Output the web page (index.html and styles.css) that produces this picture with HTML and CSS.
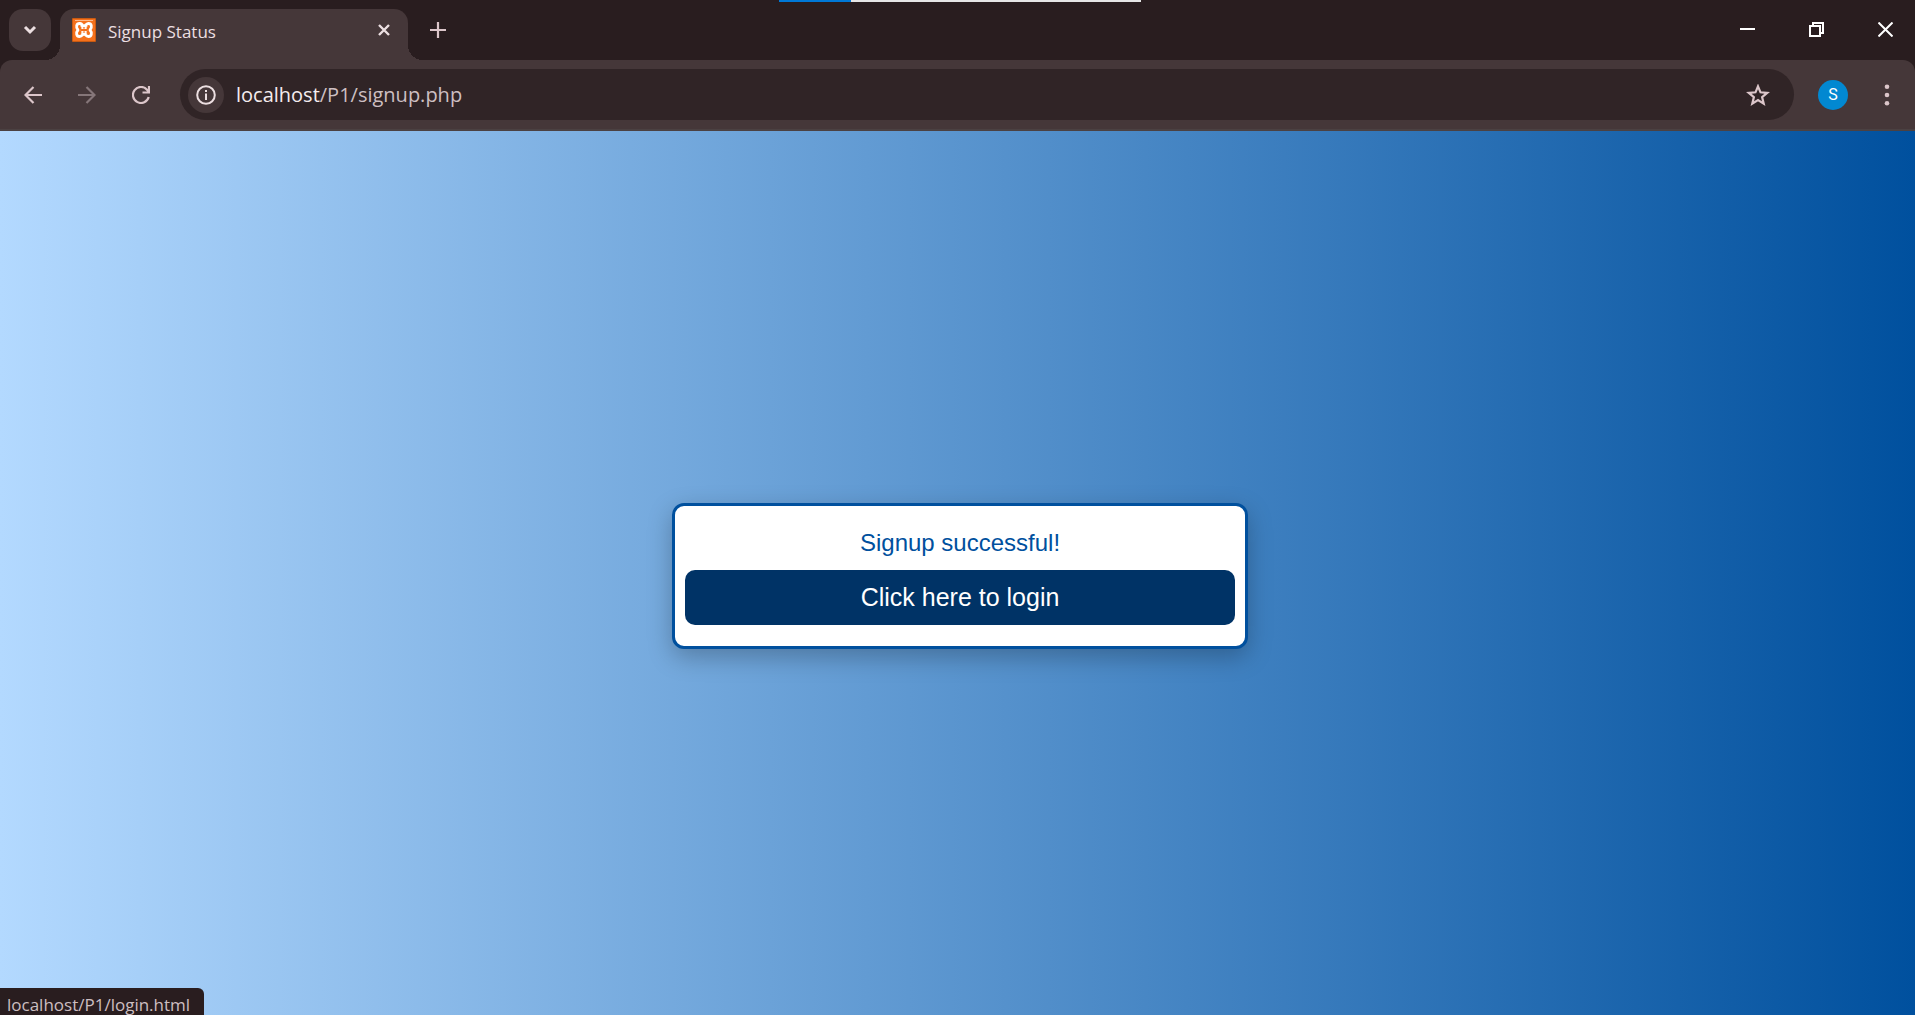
FILE: index.html
```html
<!DOCTYPE html>
<html lang="en">
<head>
<meta charset="utf-8">
<title>Signup Status</title>
<link rel="stylesheet" href="styles.css">
</head>
<body>
<div class="browser">
  <header class="tabstrip">
    <button class="tab-search" aria-label="Search tabs">
      <svg width="14" height="10" viewBox="0 0 14 10"><path d="M2 2l5 5 5-5" fill="none" stroke="currentColor" stroke-width="3"/></svg>
    </button>
    <div class="tab">
      <svg class="favicon" width="24" height="24" viewBox="0 0 24 24">
        <rect width="24" height="24" rx="1" fill="#c85a12"/>
        <rect x="1" y="1" width="22" height="22" fill="#f4701c"/>
        <path d="M3 2.500h18" stroke="#ffb98a" stroke-width="1"/>
        <path d="M9.500 12h5M9.500 9.500C10.500 7 9.500 5.500 7.500 5.500C4.500 5.500 3.500 9 6 12C3.500 15 4.500 18.500 7.500 18.500C10.500 18.500 10.500 16 12 16S13.500 18.500 16.500 18.500C19.500 18.500 20.500 15 18 12C20.500 9 19.500 5.500 16.500 5.500C14.500 5.500 13.500 8 12 8S10.500 5.500 8 5.500M14.500 9.500v5M9.500 9.500v5" fill="none" stroke="#fff" stroke-width="2.800" stroke-linecap="round" stroke-linejoin="round"/>
        <path d="M8.500 9.500v1.500M15.500 9.500v1.500M8.500 13.500v1.500M15.500 13.500v1.500M9 12h6" stroke="#f4701c" stroke-width="1.800" stroke-linecap="round"/>
      </svg>
      <span class="tab-title">Signup Status</span>
      <button class="icon-button tab-close" aria-label="Close tab">
        <svg width="12" height="12" viewBox="0 0 12 12"><path d="M1 1l10 10M11 1L1 11" stroke="currentColor" stroke-width="2.400"/></svg>
      </button>
    </div>
    <button class="icon-button new-tab" aria-label="New tab">
      <svg width="16" height="16" viewBox="0 0 16 16"><path d="M8 0v16M0 8h16" stroke="currentColor" stroke-width="2.200"/></svg>
    </button>
    <div class="window-controls">
      <button class="icon-button" aria-label="Minimize"><svg width="15" height="15" viewBox="0 0 15 15"><path d="M0 7h15" stroke="#fff" stroke-width="2"/></svg></button>
      <button class="icon-button" aria-label="Restore"><svg width="15" height="15" viewBox="0 0 15 15"><path d="M1 4h10v10H1zM4 4V1h10v10h-3" fill="none" stroke="#fff" stroke-width="2"/></svg></button>
      <button class="icon-button" aria-label="Close"><svg width="15" height="15" viewBox="0 0 15 15"><path d="M.5.500l14 14M14.500.500l-14 14" stroke="#fff" stroke-width="2"/></svg></button>
    </div>
    <div class="drag-handle"></div>
  </header>

  <nav class="toolbar">
    <button class="icon-button" aria-label="Back"><svg width="18" height="18" viewBox="0 0 18 18"><path d="M18 9H2M9.500 1L1.500 9l8 8" fill="none" stroke="currentColor" stroke-width="2.200"/></svg></button>
    <button class="icon-button forward" aria-label="Forward" disabled><svg width="18" height="18" viewBox="0 0 18 18"><path d="M0 9h16M8.500 1l8 8-8 8" fill="none" stroke="currentColor" stroke-width="2.200"/></svg></button>
    <button class="icon-button" aria-label="Reload"><svg width="18" height="18" viewBox="0 0 18 18"><path d="M16.700 11A8 8 0 1 1 15 3.700L17 6M17 0v6.500h-6.500" fill="none" stroke="currentColor" stroke-width="2.200"/></svg></button>
    <div class="omnibox">
      <button class="icon-button site-info" aria-label="View site information"><svg width="20" height="20" viewBox="0 0 20 20"><circle cx="10" cy="10" r="8.800" fill="none" stroke="currentColor" stroke-width="2"/><path d="M10 8.500V15M10 5v2" stroke="currentColor" stroke-width="2"/></svg></button>
      <span class="url"><span class="host">localhost</span>/P1/signup.php</span>
      <button class="icon-button bookmark" aria-label="Bookmark this tab"><svg width="24" height="22" viewBox="0 0 24 22"><path d="M12 2.300l2.500 6 6.700.500-5.100 4.300 1.600 6.500-5.700-3.500-5.700 3.500 1.600-6.500-5.100-4.300 6.700-.500z" fill="none" stroke="currentColor" stroke-width="2.200"/></svg></button>
    </div>
    <button class="avatar" aria-label="Profile">S</button>
    <button class="icon-button menu" aria-label="Menu"><svg width="6" height="22" viewBox="0 0 6 22"><g fill="currentColor"><circle cx="3" cy="2.700" r="2.300"/><circle cx="3" cy="11" r="2.300"/><circle cx="3" cy="19.300" r="2.300"/></g></svg></button>
  </nav>

  <main class="page">
    <section class="card">
      <p class="message">Signup successful!</p>
      <a class="login" href="login.html">Click here to login</a>
    </section>
    <div class="status">localhost/P1/login.html</div>
  </main>
</div>
</body>
</html>
```
FILE: styles.css
```css
* {
  box-sizing: border-box;
}

body {
  margin: 0;
  font-family: "Open Sans", "Noto Sans", sans-serif;
  background: #291d1f;
}

button {
  padding: 0;
  border: 0;
  font: inherit;
}

svg {
  display: block;
}

.browser {
  display: flex;
  flex-direction: column;
  min-height: 100vh;
}

.icon-button {
  display: flex;
  flex: none;
  align-items: center;
  justify-content: center;
  width: 36px;
  height: 36px;
  border-radius: 18px;
  background: transparent;
  color: #dcc6ca;
}

.tabstrip {
  position: relative;
  display: flex;
  height: 60px;
  padding: 9px 12px 0 9px;
}

.tab-search {
  display: flex;
  align-items: center;
  justify-content: center;
  width: 42px;
  height: 42px;
  border-radius: 14px;
  background: #453739;
  color: #ecdfe1;
}

.tab {
  position: relative;
  display: flex;
  align-items: center;
  width: 348px;
  height: 51px;
  margin-left: 9px;
  padding: 0 6px 9px 12px;
  border-radius: 14px 14px 0 0;
  background: #453739;
}

.tab::before,
.tab::after {
  content: "";
  position: absolute;
  bottom: 0;
  width: 15px;
  height: 15px;
}

.tab::before {
  right: 100%;
  background: radial-gradient(circle at 0 0, transparent 15px, #453739 15px);
}

.tab::after {
  left: 100%;
  background: radial-gradient(circle at 100% 0, transparent 15px, #453739 15px);
}

.tab-title {
  flex: 1;
  padding: 4px 0 0 12px;
  font-size: 17px;
  line-height: 24px;
  color: #ecdfe1;
}

.tab-close {
  color: #ecdfe1;
}

.new-tab {
  margin: 3px 0 0 12px;
}

.window-controls {
  display: flex;
  gap: 33px;
  margin: 2px 0 0 auto;
}

.drag-handle {
  position: absolute;
  top: 0;
  left: 50%;
  width: 362px;
  height: 2px;
  margin-left: -179px;
  background: linear-gradient(to right, #0078d7 72px, #e6e6e6 72px);
}

.toolbar {
  display: flex;
  align-items: center;
  height: 71px;
  padding: 0 10px 0 15px;
  gap: 18px;
  border-bottom: 2px solid #4b4142;
  border-radius: 12px 12px 0 0;
  background: #453739;
}

.forward {
  color: #857679;
}

.omnibox {
  display: flex;
  flex: 1;
  align-items: center;
  height: 51px;
  margin-left: 3px;
  padding: 0 18px 0 8px;
  border-radius: 26px;
  background: #302426;
}

.site-info {
  background: #453739;
  color: #ecdfe1;
}

.url {
  flex: 1;
  padding-left: 12px;
  font-size: 20px;
  line-height: 30px;
  color: #cdbfc1;
}

.host {
  color: #f4ecee;
}

.avatar {
  width: 30px;
  height: 30px;
  margin-left: 6px;
  border-radius: 50%;
  background: #0288d1;
  color: #fff;
  font-family: Roboto, sans-serif;
  font-size: 16px;
}

.menu {
  margin-left: 3px;
}

.page {
  position: relative;
  display: flex;
  flex: 1;
  align-items: center;
  justify-content: center;
  padding: 6px 0 0 5px;
  background: linear-gradient(to right, #b3d9ff, #00509e);
}

.card {
  width: 576px;
  max-width: 90%;
  padding: 22px 10px 21px;
  border: 3px solid #00509e;
  border-radius: 12px;
  background: #fff;
  box-shadow: 0 8px 24px rgba(0, 0, 0, 0.25);
  font-family: "Liberation Sans", Arial, sans-serif;
  text-align: center;
}

.message {
  margin: 0 0 12px;
  font-size: 24px;
  line-height: 30px;
  color: #00509e;
}

.login {
  display: block;
  padding: 12px;
  border-radius: 10px;
  background: #003366;
  color: #fff;
  font-size: 25px;
  line-height: 31px;
  text-decoration: none;
}

.status {
  position: absolute;
  bottom: 0;
  left: 0;
  height: 27px;
  padding: 5px 14px 0 7px;
  border-radius: 0 6px 0 0;
  background: #291d1f;
  color: #cdbfc1;
  font-size: 17px;
  line-height: 24px;
}
```
